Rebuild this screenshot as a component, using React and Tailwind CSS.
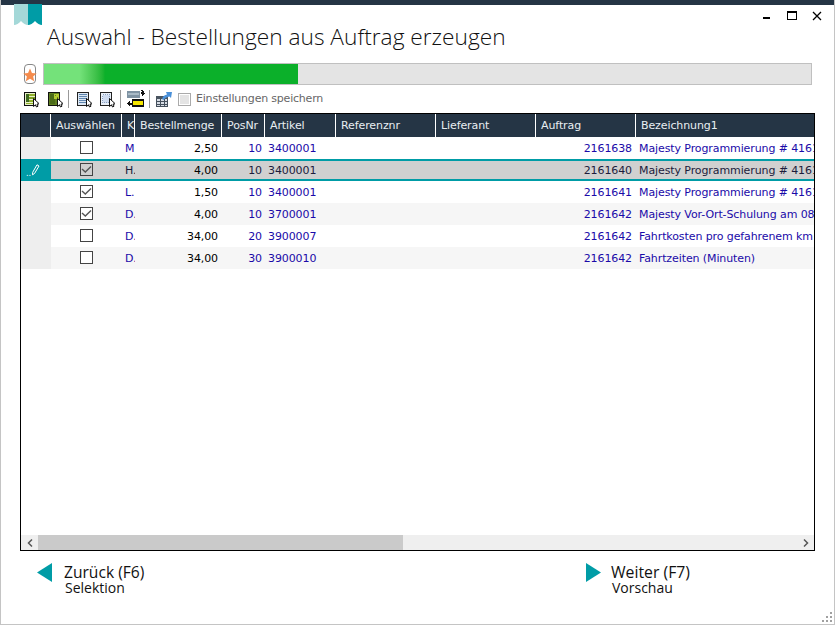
const rows = [
  { k: "M", checked: false, menge: "2,50", pos: "10", art: "3400001", auf: "2161638", bez: "Majesty Programmierung # 4161", bg: "bg-white" },
  { k: "H.", checked: true, menge: "4,00", pos: "10", art: "3400001", auf: "2161640", bez: "Majesty Programmierung # 4161", selected: true },
  { k: "L.", checked: true, menge: "1,50", pos: "10", art: "3400001", auf: "2161641", bez: "Majesty Programmierung # 4161", bg: "bg-white" },
  { k: "D.", checked: true, menge: "4,00", pos: "10", art: "3700001", auf: "2161642", bez: "Majesty Vor-Ort-Schulung am 08.", bg: "bg-[#f6f6f6]" },
  { k: "D.", checked: false, menge: "34,00", pos: "20", art: "3900007", auf: "2161642", bez: "Fahrtkosten pro gefahrenem km", bg: "bg-white" },
  { k: "D.", checked: false, menge: "34,00", pos: "30", art: "3900010", auf: "2161642", bez: "Fahrtzeiten (Minuten)", bg: "bg-[#f6f6f6]" },
];

const headers = [
  ["", "w-[29px]"],
  ["Auswählen", "w-[71px]"],
  ["K", "w-[13px]"],
  ["Bestellmenge", "w-[87px]"],
  ["PosNr", "w-[43px]"],
  ["Artikel", "w-[71px]"],
  ["Referenznr", "w-[100px]"],
  ["Lieferant", "w-[100px]"],
  ["Auftrag", "w-[100px]"],
  ["Bezeichnung1", "flex-1"],
];

function Arrow() {
  return <path d="M10.500 7.500 L10.500 15.500 L12.500 13.800 L13.500 16 L15 15.200 L14 13 L16.500 13 Z" fill="#fff" stroke="#111" strokeWidth="1" />;
}

function GreenIcon({ dark }) {
  return (
    <svg width="16" height="17" viewBox="0 0 16 17">
      <g shapeRendering="crispEdges">
        <rect x="1.500" y="1.500" width="11" height="13" fill={dark ? "#5f7f20" : "#e8f0c8"} stroke="#111" />
        {dark ? (
          <>
            <rect x="3" y="3" width="5" height="10" fill="#4a6a18" />
            <rect x="7" y="3" width="5" height="5" fill="#b4cc30" />
            <rect x="8" y="4" width="1" height="1" fill="#5f7f20" />
            <rect x="10" y="6" width="1" height="1" fill="#5f7f20" />
          </>
        ) : (
          <>
            <rect x="3" y="3" width="9" height="2" fill="#8fb02a" />
            <rect x="3" y="6" width="9" height="2" fill="#7ea024" />
            <rect x="3" y="9" width="9" height="2" fill="#8fb02a" />
            <rect x="3" y="3" width="3" height="8" fill="#3f6a20" />
            <rect x="3" y="12" width="9" height="1" fill="#8fb02a" />
          </>
        )}
      </g>
      <Arrow />
    </svg>
  );
}

function BlueIcon({ dotted }) {
  return (
    <svg width="16" height="17" viewBox="0 0 16 17">
      <g shapeRendering="crispEdges">
        <rect x="1.500" y="1.500" width="11" height="13" fill={dotted ? "#eaf0f8" : "#dbe6f2"} stroke="#222" />
        {dotted ? (
          <rect x="3.500" y="3.500" width="7" height="8" fill="#cfdcf0" stroke="#8aa0c0" strokeDasharray="1 1" />
        ) : (
          <>
            <rect x="3" y="3" width="8" height="1" fill="#5f86b0" />
            <rect x="3" y="5" width="8" height="1" fill="#5f86b0" />
            <rect x="3" y="7" width="8" height="1" fill="#5f86b0" />
            <rect x="3" y="9" width="8" height="1" fill="#5f86b0" />
            <rect x="3" y="11" width="8" height="1" fill="#5f86b0" />
          </>
        )}
      </g>
      <Arrow />
    </svg>
  );
}

function SwapIcon() {
  return (
    <svg width="18" height="18" viewBox="0 0 18 18" shapeRendering="crispEdges">
      <rect x="0" y="1" width="13" height="7" fill="#7f93a3" />
      <rect x="1" y="3" width="11" height="2" fill="#a9bac6" />
      <rect x="5" y="9" width="12" height="8" fill="#111" />
      <rect x="6" y="11" width="10" height="4" fill="#f5e600" />
      <path d="M14 0h2v1h1v2h1v1h-1v1h-1v1h-1v-2h-1V2h1z" fill="#111" />
      <path d="M2 11h1v2h2v2H3v1H2v-1H1v-1H0v-1h1v-1h1z" fill="#111" />
    </svg>
  );
}

function GridArrowIcon() {
  return (
    <svg width="16" height="18" viewBox="0 0 16 18">
      <g shapeRendering="crispEdges">
        <rect x="0.500" y="6.500" width="11" height="10" fill="#d6dce4" stroke="#44505c" strokeWidth="1" />
        <rect x="0" y="6" width="12" height="3" fill="#4a5560" />
        <path d="M4.500 8v9M8.500 8v9M0 11.500h12M0 14.500h12" stroke="#44505c" strokeWidth="1" fill="none" />
      </g>
      <path d="M6 9 C7 6 9 5 11 4.500 L10 2 L16 2 L15 8 L13.500 6.500 C11 7 9 8 7.500 10 Z" fill="#4a90d9" />
    </svg>
  );
}

function Checkbox({ checked, selected }) {
  return (
    <span className={`flex h-[13px] w-[13px] items-center justify-center border border-[#444] ${selected ? "bg-[#d0d0d0]" : "bg-white"}`}>
      {checked && (
        <svg width="11" height="11" viewBox="0 0 11 11">
          <path d="M1 5 L4.300 8 L10 2.500" fill="none" stroke="#555" strokeWidth="1.400" />
        </svg>
      )}
    </span>
  );
}

function Row({ r }) {
  const text = r.selected ? "text-[#1c1c3c]" : "text-[#1a0aa8]";
  if (r.selected) {
    return (
      <div className="flex h-[22px] border-y-2 border-[#009ca6] bg-[#d0d0d0] leading-[20px]">
        <div className="flex w-[30px] items-center bg-[#009ca6] pl-[5px] text-white">
          <span className="mt-[8px] text-[8px] leading-none">..</span>
          <svg width="9" height="12" viewBox="0 0 9 12">
            <path d="M6 0.800 L8 2 L3.500 9.500 L1.500 10.800 L1.700 8.300 Z" fill="#009ca6" stroke="#fff" strokeWidth="1" />
          </svg>
        </div>
        <Cells r={r} text={text} />
      </div>
    );
  }
  return (
    <div className={`flex h-[22px] leading-[24px] ${r.bg}`}>
      <div className="w-[30px] bg-[#eeeeee]" />
      <Cells r={r} text={text} />
    </div>
  );
}

function Cells({ r, text }) {
  return (
    <>
      <div className="flex w-[71px] items-center justify-center pb-px">
        <Checkbox checked={r.checked} selected={r.selected} />
      </div>
      <div className={`h-full w-[13px] overflow-hidden pl-[3px] ${text}`}>{r.k}</div>
      <div className="w-[87px] pr-[4px] text-right text-black">{r.menge}</div>
      <div className={`w-[43px] pr-[3px] text-right ${text}`}>{r.pos}</div>
      <div className={`w-[71px] pl-[3px] ${text}`}>{r.art}</div>
      <div className="w-[100px]" />
      <div className="w-[100px]" />
      <div className={`w-[100px] pr-[4px] text-right ${text}`}>{r.auf}</div>
      <div className={`h-full flex-1 overflow-hidden whitespace-nowrap pl-[3px] ${text}`}>{r.bez}</div>
    </>
  );
}

export default function App() {
  return (
    <div className="relative flex h-[625px] w-[835px] flex-col overflow-hidden border-x border-b border-[#c4c4c4] bg-white font-['DejaVu_Sans',sans-serif] text-[11px] tracking-[-0.1px]">
      <div className="h-[5px] w-full bg-[#253545]" />

      <svg className="absolute left-[13px] top-[4px]" width="28" height="21" viewBox="0 0 28 21">
        <path d="M0 0H14V21 Q10.500 21 7 17 Q3.500 21 0 21Z" fill="#a4d8d8" />
        <path d="M14 0H28V21 Q24.500 21 21 17 Q17.500 21 14 21Z" fill="#009ca6" />
      </svg>

      <div className="absolute right-[12px] top-[11px] flex items-start">
        <svg width="7" height="9" viewBox="0 0 7 9" shapeRendering="crispEdges"><rect x="0" y="6" width="7" height="2" fill="#000" /></svg>
        <svg className="ml-[17px]" width="10" height="9" viewBox="0 0 10 9" shapeRendering="crispEdges"><path d="M0 0H10V9H0Z M1 2V8H9V2Z" fillRule="evenodd" fill="#000" /></svg>
        <svg className="ml-[15px]" width="10" height="10" viewBox="0 0 10 10"><path d="M1 1L9 9M9 1L1 9" stroke="#000" strokeWidth="1.300" /></svg>
      </div>

      <h1 className="ml-[46px] mt-[14px] h-[44px] font-['Open_Sans',sans-serif] text-[22.7px] font-light leading-[36px] tracking-normal text-[#111]">
        Auswahl - Bestellungen aus Auftrag erzeugen
      </h1>

      <div className="ml-[23px] mr-[22px] flex h-[22px] items-center gap-[7px]">
        <div className="flex h-[20px] w-[12px] items-center justify-center rounded-[4px] border border-[#888] bg-white">
          <svg className="-mx-[2px] mt-[2px] shrink-0" width="14" height="14" viewBox="0 0 13 13">
            <path d="M6.500 0.500 L8.300 4.600 L12.700 5 L9.400 7.900 L10.400 12.300 L6.500 10 L2.600 12.300 L3.600 7.900 L0.300 5 L4.700 4.600 Z" fill="#f58b4c" />
          </svg>
        </div>
        <div className="h-[22px] flex-1 border border-[#c0c0c0] bg-[#e4e4e4]">
          <div className="h-full w-[254px] bg-gradient-to-r from-[#74e27a] from-[14%] to-[#0bb02a] to-[24%]" />
        </div>
      </div>

      <div className="ml-[22px] mt-[4px] flex h-[20px] items-center text-[#555]">
        <GreenIcon />
        <span className="w-[8px]" />
        <GreenIcon dark />
        <span className="ml-[5px] mr-[7px] h-[18px] w-px bg-[#999]" />
        <BlueIcon />
        <span className="w-[7px]" />
        <BlueIcon dotted />
        <span className="ml-[5px] mr-[6px] h-[18px] w-px bg-[#999]" />
        <SwapIcon />
        <span className="ml-[4px] mr-[6px] h-[18px] w-px bg-[#999]" />
        <GridArrowIcon />
        <span className="ml-[6px] flex h-[13px] w-[13px] items-center justify-center border border-[#aaa] bg-white">
          <span className="h-[9px] w-[9px] bg-[#e4e4e4]" />
        </span>
        <span className="ml-[5px] whitespace-nowrap tracking-[-0.2px] text-[#666]">Einstellungen speichern</span>
      </div>

      <div className="mx-[19px] mt-[4px] flex h-[438px] flex-col border border-black">
        <div className="flex h-[23px] shrink-0 bg-[#253545] text-[#e8eef2]">
          {headers.map(([label, w], i) => (
            <div key={i} className={`${w} overflow-hidden whitespace-nowrap pl-[5px] leading-[24px] ${i > 0 ? "border-l border-white" : ""}`}>
              {label}
            </div>
          ))}
        </div>
        <div className="flex-1">
          {rows.map((r, i) => (
            <Row key={i} r={r} />
          ))}
        </div>
        <div className="flex h-[15px] shrink-0 items-center bg-[#efefef]">
          <div className="flex h-full w-[17px] items-center justify-center">
            <svg width="6" height="8" viewBox="0 0 6 8"><path d="M5 0.500L1.500 4 5 7.500" fill="none" stroke="#555" strokeWidth="1.500" /></svg>
          </div>
          <div className="h-full w-[365px] bg-[#cacaca]" />
          <div className="flex-1" />
          <div className="flex h-full w-[17px] items-center justify-center">
            <svg width="6" height="8" viewBox="0 0 6 8"><path d="M1 0.500L4.500 4 1 7.500" fill="none" stroke="#555" strokeWidth="1.500" /></svg>
          </div>
        </div>
      </div>

      <div className="mt-[13px] flex font-['Open_Sans',sans-serif] tracking-normal text-[#111]">
        <div className="ml-[36px] flex w-[549px]">
          <svg className="-mt-px" width="15" height="19" viewBox="0 0 15 19"><path d="M15 0V19L0 9.500Z" fill="#009ca6" /></svg>
          <div className="ml-[12px]">
            <div className="text-[15.6px] leading-[16px]">Zurück (F6)</div>
            <div className="pl-px text-[14px] leading-[16px]">Selektion</div>
          </div>
        </div>
        <div className="flex">
          <svg className="-mt-px" width="15" height="19" viewBox="0 0 15 19"><path d="M0 0V19L15 9.500Z" fill="#009ca6" /></svg>
          <div className="ml-[10px]">
            <div className="text-[15.8px] leading-[16px]">Weiter (F7)</div>
            <div className="pl-px text-[14px] leading-[16px]">Vorschau</div>
          </div>
        </div>
      </div>

      <svg className="absolute bottom-[1px] right-[1px]" width="11" height="11" viewBox="0 0 11 11" shapeRendering="crispEdges">
        <path d="M8 0h2v2H8zM4 4h2v2H4zM8 4h2v2H8zM0 8h2v2H0zM4 8h2v2H4zM8 8h2v2H8z" fill="#a0a0a0" />
      </svg>
    </div>
  );
}
